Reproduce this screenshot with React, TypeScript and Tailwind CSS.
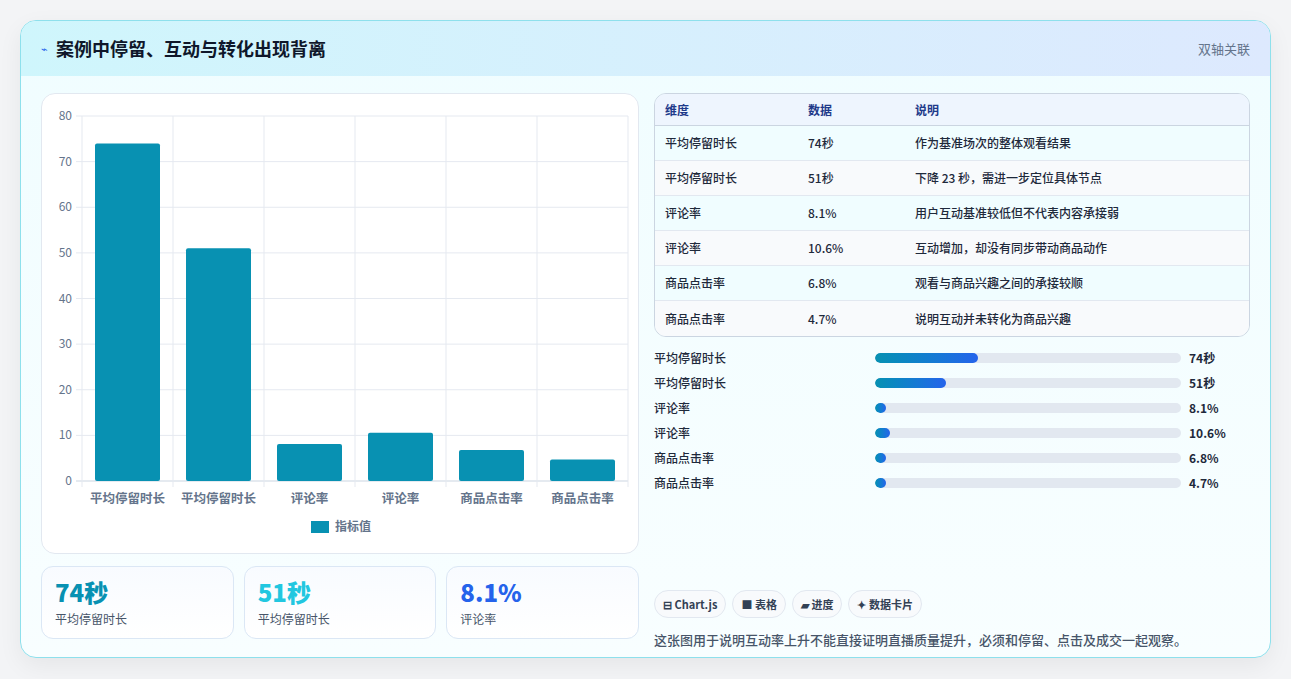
import React from "react";

const bars = [
  { l: "平均停留时长", v: 74 },
  { l: "平均停留时长", v: 51 },
  { l: "评论率", v: 8.1 },
  { l: "评论率", v: 10.6 },
  { l: "商品点击率", v: 6.8 },
  { l: "商品点击率", v: 4.7 },
];
const rows = [
  ["平均停留时长", "74秒", "作为基准场次的整体观看结果"],
  ["平均停留时长", "51秒", "下降 23 秒，需进一步定位具体节点"],
  ["评论率", "8.1%", "用户互动基准较低但不代表内容承接弱"],
  ["评论率", "10.6%", "互动增加，却没有同步带动商品动作"],
  ["商品点击率", "6.8%", "观看与商品兴趣之间的承接较顺"],
  ["商品点击率", "4.7%", "说明互动并未转化为商品兴趣"],
];
const prog = [
  ["平均停留时长", 33.6, "74秒"],
  ["平均停留时长", 23.2, "51秒"],
  ["评论率", 3.7, "8.1%"],
  ["评论率", 4.8, "10.6%"],
  ["商品点击率", 3.1, "6.8%"],
  ["商品点击率", 2.1, "4.7%"],
];

function Chart() {
  const L = 40, R = 586, T = 22, B = 387;
  const h = B - T;
  const cw = (R - L) / 6;
  return (
    <svg width="598" height="461" className="block">
      {[0, 10, 20, 30, 40, 50, 60, 70, 80].map((t) => {
        const y = B - (t / 80) * h;
        return (
          <g key={t}>
            <line x1={L - 6} x2={R} y1={y} y2={y} stroke={t === 0 ? "#cbd5e1" : "#e5e9f0"} />
            <text x={L - 10} y={y + 4} textAnchor="end" fontSize="12" fill="#64748b">{t}</text>
          </g>
        );
      })}
      {Array.from({ length: 7 }).map((_, i) => (
        <line key={i} x1={L + i * cw} x2={L + i * cw} y1={T} y2={B + 6} stroke="#e5e9f0" />
      ))}
      {bars.map((b, i) => {
        const bh = (b.v / 80) * h;
        return (
          <g key={i}>
            <rect x={L + i * cw + 13} y={B - bh} width={cw - 26} height={bh} rx="2" fill="#0891b2" />
            <text x={L + i * cw + cw / 2} y={B + 22} textAnchor="middle" fontSize="12.5" fill="#64748b" fontWeight="600">{b.l}</text>
          </g>
        );
      })}
      <rect x="269" y="427" width="18" height="12" fill="#0891b2" />
      <text x="293" y="437" fontSize="12" fill="#64748b" fontWeight="600">指标值</text>
    </svg>
  );
}

export default function App() {
  return (
    <div className="min-h-[679px] bg-[#f3f4f6] p-5 pb-0" style={{ fontFamily: '"Noto Sans CJK SC", "Noto Sans", sans-serif' }}>
      <div className="h-[638px] rounded-[16px] border border-[#8ee0ec] bg-gradient-to-b from-[#f0fdff] to-[#f8feff] overflow-hidden shadow-[0_8px_24px_rgba(0,0,0,0.06)]">
        <div className="h-[55px] flex items-center justify-between px-5 bg-gradient-to-r from-[#cff6fc] to-[#dde9fe]">
          <div className="flex items-center gap-2">
            <span className="text-[#2563eb] text-[11px]">⌁</span>
            <span className="text-[18px] font-bold text-[#0f172a]">案例中停留、互动与转化出现背离</span>
          </div>
          <span className="text-[13px] text-[#64748b]">双轴关联</span>
        </div>
        <div className="flex gap-[15px] px-5 pt-[17px]">
          <div className="w-[598px] flex flex-col gap-3">
            <div className="h-[461px] rounded-[14px] border border-[#e2e8f0] bg-white overflow-hidden">
              <Chart />
            </div>
            <div className="flex gap-[10px]">
              {[
                ["74秒", "text-[#0891b2]", "平均停留时长"],
                ["51秒", "text-[#22c7e0]", "平均停留时长"],
                ["8.1%", "text-[#2563eb]", "评论率"],
              ].map(([v, c, l], i) => (
                <div key={i} className="flex-1 h-[73px] rounded-[12px] border border-[#dbe7f5] bg-gradient-to-b from-[#f8fbff] to-white px-[13px] pt-[9px]">
                  <div className={`text-[24px] font-extrabold leading-[32px] ${c}`}>{v}</div>
                  <div className="text-[12px] text-[#475569] mt-[2px]">{l}</div>
                </div>
              ))}
            </div>
          </div>
          <div className="w-[598px] flex flex-col">
            <div className="rounded-[12px] border border-[#cbd5e1] overflow-hidden text-[12px]">
              <div className="flex h-[32px] items-center bg-[#eef5fe] text-[#1e3a8a] font-semibold border-b border-[#cbd5e1]">
                <span className="w-[153px] pl-[10px]">维度</span>
                <span className="w-[107px]">数据</span>
                <span>说明</span>
              </div>
              {rows.map((r, i) => (
                <div key={i} className={`flex h-[35px] items-center text-[#1e293b] font-medium ${i < 5 ? "border-b border-[#e2e8f0]" : ""} ${i % 2 ? "bg-[#f8fafc]" : "bg-[#f0fdff]"}`}>
                  <span className="w-[153px] pl-[10px]">{r[0]}</span>
                  <span className="w-[107px]">{r[1]}</span>
                  <span>{r[2]}</span>
                </div>
              ))}
            </div>
            <div className="mt-[8px] flex flex-col">
              {prog.map(([l, p, v], i) => (
                <div key={i} className="flex items-center h-[25px] text-[12px]">
                  <span className="w-[221px] text-[#1e293b] font-medium">{l}</span>
                  <div className="w-[306px] h-[10px] rounded-full bg-[#e2e8f0] overflow-hidden">
                    <div className="h-full rounded-full bg-gradient-to-r from-[#0891b2] to-[#2563eb] min-w-[11px]" style={{ width: `${p}%` }} />
                  </div>
                  <span className="ml-[8px] font-bold text-[#1e293b]">{v}</span>
                </div>
              ))}
            </div>
            <div className="mt-[95px] flex gap-[6px] text-[11px] font-semibold text-[#334155]">
              {["⊟ Chart.js", "■ 表格", "▰ 进度", "✦ 数据卡片"].map((t) => (
                <span key={t} className="h-[28px] px-[8px] flex items-center rounded-full border border-[#e2e8f0] bg-[#f8fafc]">{t}</span>
              ))}
            </div>
            <div className="mt-[12px] text-[13px] text-[#475569] font-medium">这张图用于说明互动率上升不能直接证明直播质量提升，必须和停留、点击及成交一起观察。</div>
          </div>
        </div>
      </div>
    </div>
  );
}
